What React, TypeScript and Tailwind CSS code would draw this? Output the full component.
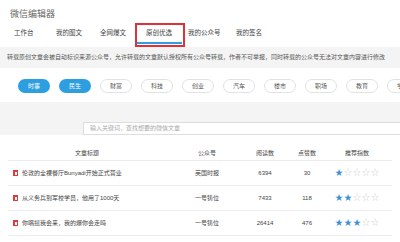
import { useState } from "react";

type Row = {
  title: string;
  account: string;
  reads: number;
  likes: number;
  stars: number;
};

const tabs = [
  { name: "工作台", w: "w-[42px]" },
  { name: "我的图文", w: "w-[44px]" },
  { name: "全网爆文", w: "w-[46px]" },
  { name: "原创优选", w: "w-[42px]" },
  { name: "我的公众号", w: "w-[48px]" },
  { name: "我的签名", w: "w-[40px]" },
];

const chips = ["时事", "民生", "财富", "科技", "创业", "汽车", "楼市", "职场", "教育", "学习"];

const rows: Row[] = [
  { title: "伦敦的全裸餐厅Bunyadi开始正式营业", account: "英国时报", reads: 6394, likes: 30, stars: 1 },
  { title: "从义务兵到军校学员，他用了1000天", account: "一号铸位", reads: 7433, likes: 118, stars: 2 },
  { title: "你唱摇我会来，我的爆你会走吗", account: "一号铸位", reads: 26414, likes: 476, stars: 3 },
];

function Stars({ n }: { n: number }) {
  return (
    <div className="flex justify-center gap-[1px] text-[8px] leading-none">
      {[0, 1, 2, 3, 4].map((i) =>
        i < n ? (
          <span key={i} className="text-[#3a8fd8]">★</span>
        ) : (
          <span key={i} className="text-[#cfcfcf]">☆</span>
        )
      )}
    </div>
  );
}

export default function App() {
  const [tab] = useState("原创优选");
  const [picked] = useState(["时事", "民生"]);

  return (
    <main
      className="w-[400px] h-[242px] overflow-hidden bg-white text-[#555]"
      style={{ fontFamily: '"Liberation Sans","Noto Sans CJK SC",sans-serif' }}
    >
      {/* header */}
      <header className="h-[47px] pt-[9px] pl-[10px]">
        <div className="text-[9px] leading-[10px] text-[#666]">微信编辑器</div>
        <nav className="flex mt-[9px] pl-[4px]">
          {tabs.map((t) => (
            <div key={t.name} className={`${t.w} shrink-0 text-[6.5px] leading-[10px] text-[#444]`}>
              {t.name === tab ? (
                <span className="relative inline-block">
                  {t.name}
                  <span className="absolute left-[-9px] right-[-10px] top-[14px] h-[2px] bg-[#2f9fe0]" />
                  <span className="absolute left-[-11px] right-[-13px] top-[-5px] h-[24px] border-2 border-[#e0303a]" />
                </span>
              ) : (
                t.name
              )}
            </div>
          ))}
        </nav>
      </header>

      {/* notice */}
      <div className="h-[21px] bg-[#f4f4f4] pl-[7px] flex items-center">
        <p className="whitespace-nowrap overflow-hidden text-[6px] text-[#555]">
          转载原创文章会被自动标识来源公众号，允许转载的文章默认授权所有公众号转载，作者不可举报，同时转载的公众号无法对文章内容进行修改
        </p>
      </div>

      {/* chips */}
      <div className="h-[34px] pt-[11px] pl-[18px] flex gap-[9px] overflow-hidden">
        {chips.map((c) =>
          picked.includes(c) ? (
            <span
              key={c}
              className="w-[32px] h-[14px] shrink-0 rounded-full bg-[#2d9ee0] text-white text-[6px] flex items-center justify-center"
            >
              {c}
            </span>
          ) : (
            <span
              key={c}
              className="w-[32px] h-[14px] shrink-0 rounded-full border border-[#e2e2e2] text-[#555] text-[6px] flex items-center justify-center"
            >
              {c}
            </span>
          )
        )}
      </div>

      {/* search */}
      <div className="h-[33px] bg-[#f4f4f4] pt-[11px] pl-[83px]">
        <input
          className="w-[330px] h-[13px] bg-white border border-[#dedede] pl-[6px] text-[6px] outline-none placeholder:text-[#aaa]"
          placeholder="输入关键词，查找想要的微信文章"
        />
      </div>

      {/* table */}
      <section className="pt-[12px] px-[8px]">
        <div className="flex h-[14px] items-center border-b border-[#ececec] text-[6px] text-[#444]">
          <div className="w-[158px] text-center">文章标题</div>
          <div className="w-[82px] text-center">公众号</div>
          <div className="w-[34px] text-center">阅读数</div>
          <div className="w-[50px] text-center">点赞数</div>
          <div className="w-[50px] text-center">推荐指数</div>
        </div>
        {rows.map((r) => (
          <div key={r.title} className="flex h-[25px] items-center border-b border-[#ececec] text-[6px] text-[#444]">
            <div className="w-[158px] pl-[5px] flex items-center gap-[4px]">
              <span className="w-[5px] h-[6px] bg-[#e03a3a] flex items-center justify-center">
                <span className="w-[2px] h-[3px] bg-white" />
              </span>
              <span className="whitespace-nowrap">{r.title}</span>
            </div>
            <div className="w-[82px] text-center">{r.account}</div>
            <div className="w-[34px] text-center">{r.reads}</div>
            <div className="w-[50px] text-center">{r.likes}</div>
            <div className="w-[50px]">
              <Stars n={r.stars} />
            </div>
          </div>
        ))}
      </section>
    </main>
  );
}
